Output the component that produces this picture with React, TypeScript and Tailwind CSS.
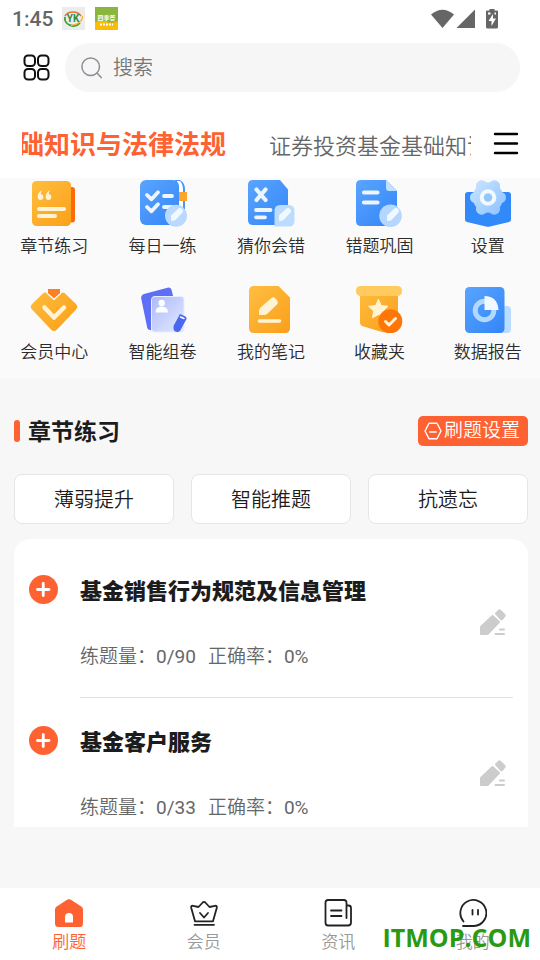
import type { ReactNode } from "react"

const tools: { label: string; icon: ReactNode }[] = [
    { label: "章节练习", icon: <ChapterIcon /> },
    { label: "每日一练", icon: <DailyIcon /> },
    { label: "猜你会错", icon: <GuessIcon /> },
    { label: "错题巩固", icon: <MistakeIcon /> },
    { label: "设置", icon: <SettingsIcon /> },
    { label: "会员中心", icon: <VipIcon /> },
    { label: "智能组卷", icon: <PaperIcon /> },
    { label: "我的笔记", icon: <NotesIcon /> },
    { label: "收藏夹", icon: <FavoritesIcon /> },
    { label: "数据报告", icon: <ReportIcon /> },
]

const modes = ["薄弱提升", "智能推题", "抗遗忘"]

const chapters = [
    { title: "基金销售行为规范及信息管理", done: "0/90", rate: "0%" },
    { title: "基金客户服务", done: "0/33", rate: "0%" },
]

export default function App() {
    return (
        <div className="flex min-h-screen flex-col overflow-x-hidden bg-[#f7f7f7] font-['Roboto','Noto_Sans_CJK_SC',sans-serif] text-[#1c1c1c]">
            <header className="bg-white">
                <StatusBar />
                <div className="flex items-center gap-[15px] pt-[6px] pr-5 pl-[23px]">
                    <button type="button" aria-label="分类" className="shrink-0">
                        <svg className="h-[27px] w-[27px]" viewBox="0 0 27 27" fill="none" stroke="#111" strokeWidth="2">
                            <rect x="1.5" y="1.5" width="10.5" height="10.5" rx="3.5" />
                            <rect x="15" y="1.5" width="10.5" height="10.5" rx="3.5" />
                            <rect x="1.5" y="15" width="10.5" height="10.5" rx="3.5" />
                            <rect x="15" y="15" width="10.5" height="10.5" rx="3.5" />
                        </svg>
                    </button>
                    <label className="flex h-[49px] flex-1 items-center gap-2.5 rounded-full bg-[#f6f6f6] px-4">
                        <svg className="h-[22px] w-[22px] shrink-0" viewBox="0 0 22 22" fill="none" stroke="#8d8d96" strokeWidth="1.5" strokeLinecap="round">
                            <circle cx="9.7" cy="9.7" r="8.8" />
                            <path d="M16.2 16.2 20.2 20.6" />
                        </svg>
                        <input type="text" aria-label="搜索" placeholder="搜索" className="w-full min-w-0 bg-transparent text-xl font-[350] outline-none placeholder:text-[#777]" />
                    </label>
                </div>
                <div className="flex h-[86px] items-center pt-[18px] pr-[21px] pl-[22px]">
                    <nav className="flex flex-1 items-center gap-[43px] overflow-hidden pt-[2px] whitespace-nowrap">
                        <a href="#law" className="-ml-1 text-[26px] leading-9 font-bold text-[#fe6232]">础知识与法律法规</a>
                        <a href="#basic" className="w-0 pt-1 text-[22px] leading-8 font-[350] text-[#666]">证券投资基金基础知识</a>
                    </nav>
                    <button type="button" aria-label="菜单" className="ml-[22px]">
                        <svg className="h-[26px] w-[26px]" viewBox="0 0 26 26" stroke="#000" strokeWidth="2.4" strokeLinecap="round">
                            <path d="M2 3h22M2 12.500h22M2 22h22" />
                        </svg>
                    </button>
                </div>
            </header>

            <section className="bg-[#fafafa] pt-[1px] pb-[15px]">
                <div className="-mr-[2px] grid grid-cols-5 gap-y-7">
                    {tools.map((tool) => (
                        <a key={tool.label} href="#tool" className="flex flex-col items-center gap-2">
                            {tool.icon}
                            <span className="text-[17px] leading-[22px] font-[350] whitespace-nowrap text-[#2b2b2b]">{tool.label}</span>
                        </a>
                    ))}
                </div>
            </section>

            <main className="flex-1 pt-[38px] pr-3 pb-[61px] pl-3.5">
                <div className="flex h-[30px] items-center">
                    <span className="h-[22px] w-[6px] rounded-[3px] bg-[#fe6232]" />
                    <h2 className="ml-2 pt-1 text-[23px] leading-[30px] font-bold">章节练习</h2>
                    <button type="button" className="ml-auto flex h-[30px] items-center gap-[2px] rounded-[5px] bg-[#fe6232] pr-2 pl-[6px] text-[19px] text-white">
                        <svg className="h-[18px] w-[18px]" viewBox="0 0 18 18" fill="none" stroke="#fff" strokeWidth="1.4" strokeLinejoin="round" strokeLinecap="round">
                            <path d="M5 1.2h8L17 9l-4 7.8H5L1 9zM5.8 10h6.4" />
                        </svg>
                        <span className="leading-[28px] font-[350]">刷题设置</span>
                    </button>
                </div>

                <div className="mt-7 grid grid-cols-3 gap-[17px]">
                    {modes.map((mode) => (
                        <button key={mode} type="button" className="h-[50px] rounded-lg border border-[#e6e6e6] bg-white pt-[2px] text-xl font-[350]">
                            {mode}
                        </button>
                    ))}
                </div>

                <ul className="mt-[15px] rounded-t-2xl bg-white pt-2 pr-[15px] pl-[15px]">
                    {chapters.map((chapter) => (
                        <ChapterRow key={chapter.title} {...chapter} />
                    ))}
                </ul>
            </main>

            <BottomNav />
        </div>
    )
}

function StatusBar() {
    return (
        <div className="flex h-[37px] items-center pr-[41px] pl-3 text-[#666]">
            <span className="pt-[2px] text-[21px] font-medium">1:45</span>
            <svg className="ml-[9px] h-[23px] w-[23px]" viewBox="0 0 23 23" fill="none">
                <rect width="23" height="23" fill="#ececec" />
                <path d="M3 9a9 7.5 0 0 1 16 0" stroke="#f0702d" strokeWidth="1.6" />
                <path d="M3 10a8.5 7.5 0 0 0 15 6" stroke="#3c9b35" strokeWidth="1.8" />
                <path d="M9 18.500c6 0 12-5 11.500-9.500" stroke="#f2b52b" strokeWidth="1.3" />
                <text x="11" y="15" textAnchor="middle" fontSize="10" fontWeight="700" fill="#2b8b36">YK</text>
            </svg>
            <svg className="ml-[10px] h-[23px] w-[23px]" viewBox="0 0 23 23">
                <rect width="23" height="23" fill="#8bb63e" />
                <path d="M0 15q6-2 12 0t11-1v9H0z" fill="#fbbc05" />
                <text x="11.500" y="13" textAnchor="middle" fontSize="6" fontWeight="700" fill="#fff">四季答</text>
                <path d="M5 17.500h13" stroke="#fff" strokeWidth="1.8" strokeDasharray="2 1" />
            </svg>
            <svg className="ml-auto h-[20px] w-[68px]" viewBox="0 0 68 20" fill="#666">
                <path d="M0 5.500Q11.500-4 23 5.500L11.500 19z" />
                <path d="M44 .5V19H25.500z" />
                <path fillRule="evenodd" d="M58.500 0h5v1.500H66q1 0 1 1V18q0 1.500-1.500 1.500h-9Q55 19.500 55 18V2.500q0-1 1-1h2.500zM62 5l-4.500 7h3v5l4.500-7.500h-3zM57 3.500v2h2.500v-2zm6.500 0v2H65v-2z" />
            </svg>
        </div>
    )
}

function ChapterRow({ title, done, rate }: { title: string; done: string; rate: string }) {
    return (
        <li className="group flex gap-[22px]">
            <button type="button" aria-label="展开" className="mt-7 h-[29px] w-[29px] shrink-0 self-start rounded-full bg-[#fe6232]">
                <svg className="h-full w-full" viewBox="0 0 29 29" stroke="#fff" strokeWidth="2.8" strokeLinecap="round">
                    <path d="M8.500 14.500h11.500M14.250 8.500v12" />
                </svg>
            </button>
            <div className="flex flex-1 border-b border-[#e3e3e3] pt-[30px] pb-[26px] group-last:border-0 group-last:pb-[5px]">
                <div className="flex-1">
                    <h3 className="text-[22px] leading-[30px] font-black">{title}</h3>
                    <p className="mt-9 flex gap-3 text-[19px] leading-7 font-[350] text-[#666]">
                        <span>练题量：<span className="font-normal">{done}</span></span>
                        <span>正确率：<span className="font-normal">{rate}</span></span>
                    </p>
                </div>
                <button type="button" aria-label="做题" className="mt-8 mr-[7px] self-start">
                    <svg className="h-[26px] w-[26px]" viewBox="0 0 26 26" fill="#ccc">
                        <path d="M0 17.500 11.500 6.500q1-1 2 0l6 5.500q1 1 0 2L9 25q-.5 1-1.500 1H1q-1 0-1-1zM15.500 3.500l2.500-2.500q1.500-1.500 3 0l4 4q1.500 1.500 0 3l-2.500 3q-1 .5-2 0l-5-5.500q-1-1 0-2z" />
                        <path d="M20 20.500h4M15.500 25h8.500" stroke="#ccc" strokeWidth="2" strokeLinecap="round" />
                    </svg>
                </button>
            </div>
        </li>
    )
}

function BottomNav() {
    return (
        <nav className="relative grid h-[72px] grid-cols-4 bg-white pt-[11px] pl-[2px] text-[17px] font-[350] text-[#999]">
            <a href="#practice" className="flex flex-col items-center gap-1 text-[#fe6232]">
                <svg className="h-7 w-7" viewBox="0 0 28 28">
                    <path d="M12.500 .6q1.500-.9 3 0l10.800 6.800q1.700 1 1.700 3v14Q28 28 24.500 28h-21Q0 28 0 24.500v-14q0-2 1.700-3z" fill="currentColor" />
                    <path d="M10 23.500V18a4 4 0 0 1 8 0v5.500z" fill="#fff" />
                </svg>
                <span className="leading-[22px]">刷题</span>
            </a>
            <a href="#vip" className="flex flex-col items-center gap-1">
                <svg className="h-7 w-7" viewBox="0 0 28 28" fill="none" stroke="#222" strokeWidth="1.8" strokeLinejoin="round" strokeLinecap="round">
                    <path d="M5 22.300 1.200 8.800q-.4-2.300 1.800-2L8.500 8l4.200-4.500q1.300-1.300 2.600 0L19.500 8 25 6.800q2.200-.3 1.800 2L23 22.300z" />
                    <path d="M10 14l4 4.500 4-4.500M4.500 25.800h19.500" />
                </svg>
                <span className="leading-[22px]">会员</span>
            </a>
            <a href="#news" className="flex flex-col items-center gap-1">
                <svg className="h-7 w-7" viewBox="0 0 28 28" fill="none" stroke="#222" strokeWidth="1.8" strokeLinejoin="round" strokeLinecap="round">
                    <path d="M22.500 19V3.500q0-2.500-2.500-2.500H4Q1.500 1 1.500 3.500v20Q1.500 26.500 4 26.500h20q3 0 3-3V9q0-2.500-2.500-2.500h-2" />
                    <path d="M7 11.500h10.500M7 17h10.500" />
                </svg>
                <span className="leading-[22px]">资讯</span>
            </a>
            <a href="#me" className="flex flex-col items-center gap-1">
                <svg className="h-7 w-7" viewBox="0 0 28 28" fill="none" stroke="#222" strokeWidth="1.8" strokeLinejoin="round" strokeLinecap="round">
                    <path d="M4.500 22.500A13 13 0 1 1 15 27H4" />
                    <path d="M13.500 11v4.500M19 11v4.500" />
                </svg>
                <span className="leading-[22px]">我的</span>
            </a>
            <span className="absolute right-[9px] bottom-[6px] font-['Open_Sans',sans-serif] text-[25px] leading-[34px] font-bold text-[#2a9a12]">ITMOP.COM</span>
        </nav>
    )
}

function ToolSvg({ id, from, to, children }: { id: string; from: string; to: string; children: ReactNode }) {
    return (
        <svg className="h-12 w-12" viewBox="0 0 48 48" fill="none" strokeLinecap="round" strokeLinejoin="round">
            <defs>
                <linearGradient id={id} x1="0" y1="0" x2="48" y2="48" gradientUnits="userSpaceOnUse">
                    <stop stopColor={from} />
                    <stop offset="1" stopColor={to} />
                </linearGradient>
            </defs>
            {children}
        </svg>
    )
}

function ChapterIcon() {
    return (
        <ToolSvg id="chapter" from="#ffbf3f" to="#fb9d16">
            <rect x="30" y="8" width="15" height="35.500" rx="3" fill="#ff6a0a" />
            <rect x="2" y="2" width="39" height="45" rx="4.500" fill="url(#chapter)" />
            <path d="M12 11q-4.500 3-4.300 7a2.800 2.800 0 1 0 3-2.700q0-2 1.300-4.300zM20 11q-4.500 3-4.300 7a2.800 2.800 0 1 0 3-2.700q0-2 1.300-4.300z" fill="#fff3d6" />
            <path d="M9 30h25M9 37h16" stroke="#fff3d6" strokeWidth="4" />
        </ToolSvg>
    )
}

function DailyIcon() {
    return (
        <ToolSvg id="daily" from="#5ba5ff" to="#2f83f7">
            <path d="M36 1h5q5 3 5 9v30H36z" fill="#4796fb" />
            <path d="M38 2h3q3 3 3 9v28h-6z" fill="#fff" />
            <rect x="38" y="13" width="10" height="9" fill="#f9a62a" />
            <rect x="1" y="1" width="39" height="45" rx="6" fill="url(#daily)" />
            <path d="m8 16 4.500 4.300 6.500-7M8 28l4.500 4.300 6.500-7M25 17h8M25 28h8" stroke="#eef5ff" strokeWidth="3.800" />
            <circle cx="37" cy="36.700" r="11" fill="#b9d9ff" />
            <Pencil />
        </ToolSvg>
    )
}

function Pencil() {
    return <path d="M32 40.500v-4l7.500-7q1.500-1.500 3 0l1 1q1.500 1.500 0 3l-7 7.500q-1.500 1-3.500 1-1 0-1-1.500z" fill="#f1f8ff" />
}

function GuessIcon() {
    return (
        <ToolSvg id="guess" from="#5ba5ff" to="#2f83f7">
            <path d="M6 1h27l8 9.500V41q0 5-5 5H6q-5 0-5-5V6q0-5 5-5z" fill="url(#guess)" />
            <path d="m9.500 10.500 9 10.500m0-10.500-9 10.500" stroke="#eef5ff" strokeWidth="4.200" />
            <path d="M9 31h14.500M9 38.300h9" stroke="#eef5ff" strokeWidth="3.800" />
            <path d="M33 26h9q5.500 0 5.500 6v10q0 5.500-6 5.500H27.500V32q0-6 5.500-6z" fill="#bcdcff" />
            <Pencil />
        </ToolSvg>
    )
}

function MistakeIcon() {
    return (
        <ToolSvg id="mistake" from="#5ba5ff" to="#2f83f7">
            <path d="M6 1h25l11 11v30q0 5-5 5H6q-5 0-5-5V6q0-5 5-5z" fill="url(#mistake)" />
            <path d="M31 1l11 11h-8q-3 0-3-3z" fill="#bfe0ff" />
            <path d="M9 13.500h13.500M9 23.500h13.500" stroke="#eef5ff" strokeWidth="4.200" />
            <circle cx="35.500" cy="36.700" r="11.300" fill="#b4d6ff" />
            <Pencil />
        </ToolSvg>
    )
}

function SettingsIcon() {
    return (
        <ToolSvg id="gear" from="#d2e9ff" to="#7ab8ff">
            <path d="M4 13h40q3 0 3 3v24.500q0 2-2 2.600L26 47.500q-2 .5-4 0L3 43.100q-2-.6-2-2.600V16q0-3 3-3z" fill="#3289f9" />
            <g fill="url(#gear)">
                <circle cx="24" cy="18.500" r="15.200" />
                <circle cx="36.500" cy="18.500" r="5.500" />
                <circle cx="11.500" cy="18.500" r="5.500" />
                <circle cx="30.300" cy="7" r="5.800" />
                <circle cx="17.700" cy="7" r="5.800" />
                <circle cx="30.300" cy="30" r="5.800" />
                <circle cx="17.700" cy="30" r="5.800" />
            </g>
            <circle cx="24" cy="18.500" r="8.300" fill="#f2f9ff" />
            <circle cx="24" cy="18.500" r="4.200" fill="#93c6ff" />
        </ToolSvg>
    )
}

function VipIcon() {
    return (
        <ToolSvg id="vip" from="#ffbf3f" to="#fb9d16">
            <path d="M13.500 8q2-1 3.800.6L24 14.500l6.700-5.900q1.800-1.600 3.800-.6L46 19q2.500 2.800 0 5.500L27 44.500q-3 3-6 0L2 24.500Q-.5 21.800 2 19z" fill="url(#vip)" />
            <path d="M17 4h14v5l-7 6.300L17 9z" fill="#fafafa" />
            <path d="M18 4h12v4.300l-6 5-6-5z" fill="#fb8022" />
            <path d="m14.500 22.500 9.500 10 10-10" stroke="#fff3d6" strokeWidth="4.500" />
        </ToolSvg>
    )
}

function PaperIcon() {
    return (
        <ToolSvg id="paper" from="#9aa9fb" to="#e6ecff">
            <path d="M5 9 28.500 2.800q3-.8 4 2L41 38 12 45q-3 .5-3.700-2L2.200 13.500Q1.800 10 5 9z" fill="#5c6ff5" />
            <rect x="12.500" y="11.500" width="32.500" height="35.500" rx="3" fill="url(#paper)" stroke="#e8edff" />
            <circle cx="22.700" cy="18" r="3.200" fill="#fff" />
            <path d="M16.500 27.500q0-6 6.200-6t6.300 6z" fill="#fff" />
            <path d="m41 29 5.500 2.500q1.500 1 1 2.500L41 46q-2.500 2-5.500 0-1.500-1.500-1-5z" fill="#4c66ed" />
            <path d="m41.500 32 3.500 1.500" stroke="#fff" strokeWidth="1.500" />
        </ToolSvg>
    )
}

function NotesIcon() {
    return (
        <ToolSvg id="notes" from="#ffc043" to="#fa9c18">
            <path d="M7 1h24.500L43 12.500V43q0 5-5 5H7q-5 0-5-5V6q0-5 5-5z" fill="url(#notes)" />
            <path d="M12 30v-4q0-2 1.500-3.500L24.500 13q2-1.500 3.500 0l2.500 3q1 1.500-.5 3.500L20 29q-1 1-3 1z" fill="#fff3d6" />
            <path d="M12.500 36h20" stroke="#fff3d6" strokeWidth="3.600" />
        </ToolSvg>
    )
}

function FavoritesIcon() {
    return (
        <ToolSvg id="fav" from="#ffc043" to="#fa9c18">
            <path d="M5 6h38v40q-8 3-16 1L7 41q-2-.8-2-3z" fill="url(#fav)" />
            <rect x="1" y="1" width="46" height="10" rx="4.500" fill="#ffcb5e" />
            <path d="m23.500 14.500 2.700 6 6.800.8-5 4.700 1.300 6.800-5.800-3.300-6 3.300 1.200-6.800-5-4.700 6.800-.8z" fill="#fff3d6" stroke="#fff3d6" strokeWidth="1" />
            <circle cx="35.300" cy="36.300" r="12" fill="#fd7607" />
            <path d="m30.500 36.500 3.500 3.500 6.500-6.500" stroke="#fff3d6" strokeWidth="3" />
        </ToolSvg>
    )
}

function ReportIcon() {
    return (
        <ToolSvg id="report" from="#5ba5ff" to="#2f83f7">
            <rect x="30" y="21" width="17" height="27" rx="4" fill="#b9dcff" />
            <rect x="1" y="2" width="39.500" height="46" rx="4.500" fill="url(#report)" />
            <circle cx="20.500" cy="25.500" r="9.300" stroke="#b1d8ff" strokeWidth="5" />
            <path d="M20.500 11q13 0 14 14h-14z" fill="#f2f8ff" />
        </ToolSvg>
    )
}
